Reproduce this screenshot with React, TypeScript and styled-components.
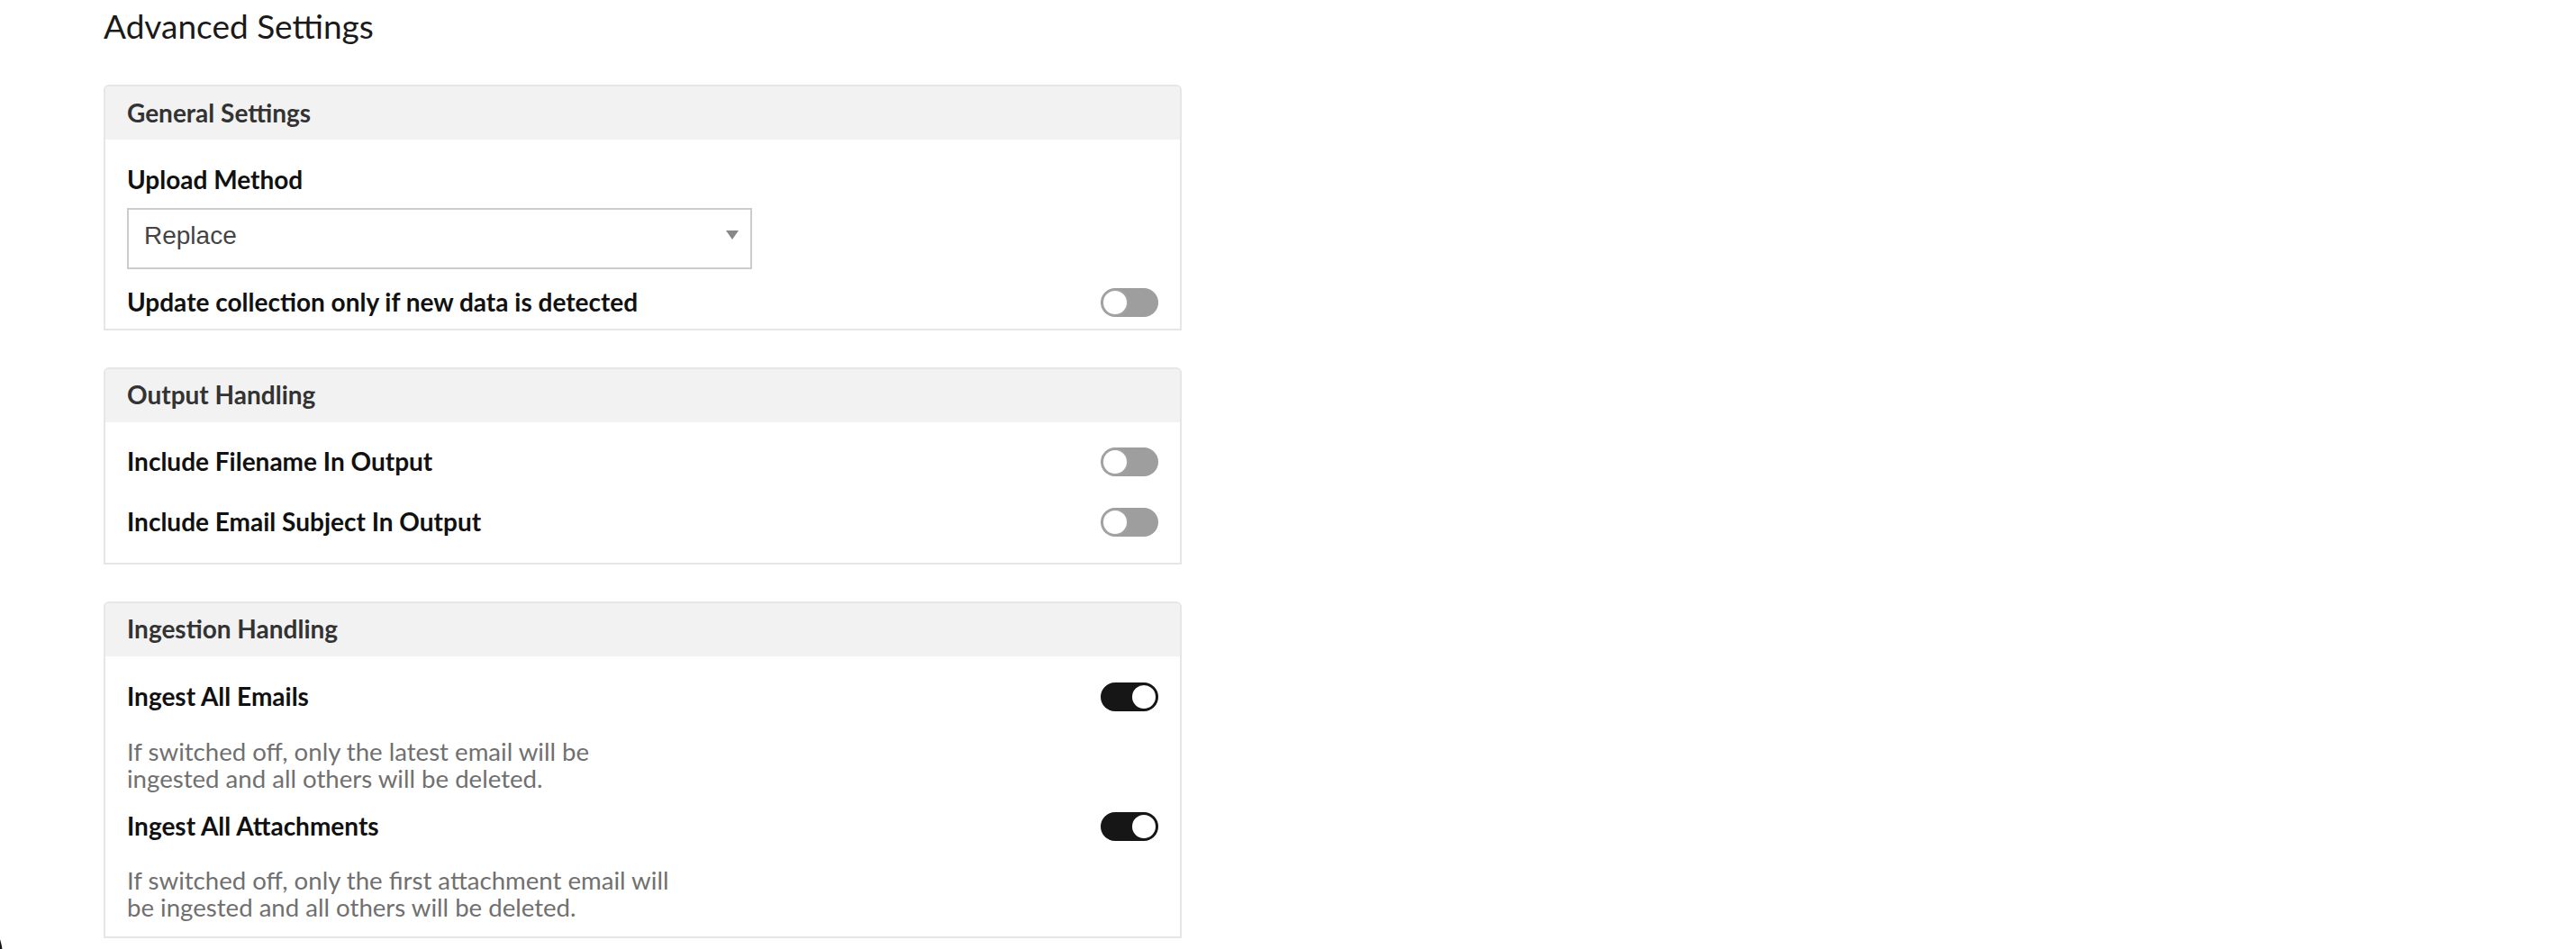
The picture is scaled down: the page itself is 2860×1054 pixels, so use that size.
import React from "react";
import styled, { createGlobalStyle } from "styled-components";

const GlobalStyle = createGlobalStyle`
  html, body {
    margin: 0;
    padding: 0;
    background: #ffffff;
  }
  body {
    font-family: Lato, "Open Sans", "Liberation Sans", sans-serif;
    color: #111111;
  }
  * { box-sizing: border-box; }
`;

const Page = styled.main`
  padding: 0 0 0 115px;
`;

const Content = styled.div`
  width: 1197px;
  display: flex;
  flex-direction: column;
`;

const Title = styled.h1`
  margin: 7px 0 0;
  font-size: 37px;
  line-height: 44px;
  font-weight: 400;
  color: #1a1a1a;
`;

const Card = styled.section<{ $top: number }>`
  margin-top: ${(p) => p.$top}px;
  border: 2px solid #e6e6e6;
  border-radius: 6px 6px 0 0;
  overflow: hidden;
  background: #ffffff;
`;

const CardHeader = styled.h2`
  margin: 0;
  height: 59px;
  padding: 0 24px;
  display: flex;
  align-items: center;
  background: #f2f2f2;
  font-size: 28px;
  line-height: 1.2;
  font-weight: 700;
  color: #333333;
`;

const CardBody = styled.div<{ $pt: number; $pb: number }>`
  padding: ${(p) => p.$pt}px 24px ${(p) => p.$pb}px;
  display: flex;
  flex-direction: column;
`;

const Label = styled.div<{ $mt?: number }>`
  margin-top: ${(p) => p.$mt ?? 0}px;
  font-size: 28px;
  line-height: 1.2;
  font-weight: 700;
  color: #111111;
`;

const SelectBox = styled.div`
  margin-top: 14px;
  width: 694px;
  height: 68px;
  border: 2px solid #cccccc;
  background: #ffffff;
  display: flex;
  align-items: center;
  justify-content: space-between;
  padding: 0 13px 5px 17px;
  font-family: "Liberation Sans", Arial, sans-serif;
  font-size: 28px;
  color: #444444;
`;

const Arrow = styled.svg`
  width: 14px;
  height: 10px;
  margin-top: -3px;
  flex: none;
`;

const ToggleRow = styled.div<{ $mt?: number }>`
  margin-top: ${(p) => p.$mt ?? 0}px;
  display: flex;
  align-items: center;
  justify-content: space-between;
  min-height: 34px;
`;

const Description = styled.p<{ $mt: number }>`
  margin: ${(p) => p.$mt}px 0 0;
  max-width: 620px;
  font-size: 27.6px;
  line-height: 30px;
  font-weight: 400;
  color: #707070;
`;

const Track = styled.span<{ $on: boolean }>`
  position: relative;
  flex: none;
  width: 64px;
  height: 32px;
  border-radius: 16px;
  background: ${(p) => (p.$on ? "#161616" : "#9e9e9e")};
`;

const Knob = styled.span<{ $on: boolean }>`
  position: absolute;
  top: 1px;
  left: ${(p) => (p.$on ? "33px" : "1px")};
  width: 30px;
  height: 30px;
  border-radius: 50%;
  background: #ffffff;
  border: 2px solid ${(p) => (p.$on ? "#161616" : "#a3a3a3")};
`;

const Corner = styled.div`
  position: fixed;
  left: -117px;
  top: 1002px;
  width: 120px;
  height: 120px;
  border-radius: 50%;
  background: #151515;
`;

const Toggle = ({ on }: { on: boolean }) => (
  <Track $on={on} role="switch" aria-checked={on}>
    <Knob $on={on} />
  </Track>
);

export default function App() {
  return (
    <>
      <GlobalStyle />
      <Page>
        <Content>
          <Title>Advanced Settings</Title>

          <Card $top={43}>
            <CardHeader>General Settings</CardHeader>
            <CardBody $pt={28} $pb={12}>
              <Label>Upload Method</Label>
              <SelectBox>
                <span>Replace</span>
                <Arrow viewBox="0 0 14 10">
                  <path d="M0 0 L14 0 L7 10 Z" fill="#888888" />
                </Arrow>
              </SelectBox>
              <ToggleRow $mt={20}>
                <Label>Update collection only if new data is detected</Label>
                <Toggle on={false} />
              </ToggleRow>
            </CardBody>
          </Card>

          <Card $top={41}>
            <CardHeader>Output Handling</CardHeader>
            <CardBody $pt={27} $pb={28}>
              <ToggleRow>
                <Label>Include Filename In Output</Label>
                <Toggle on={false} />
              </ToggleRow>
              <ToggleRow $mt={33}>
                <Label>Include Email Subject In Output</Label>
                <Toggle on={false} />
              </ToggleRow>
            </CardBody>
          </Card>

          <Card $top={41}>
            <CardHeader>Ingestion Handling</CardHeader>
            <CardBody $pt={28} $pb={17}>
              <ToggleRow>
                <Label>Ingest All Emails</Label>
                <Toggle on={true} />
              </ToggleRow>
              <Description $mt={29}>
                If switched off, only the latest email will be ingested and all
                others will be deleted.
              </Description>
              <ToggleRow $mt={21}>
                <Label>Ingest All Attachments</Label>
                <Toggle on={true} />
              </ToggleRow>
              <Description $mt={28}>
                If switched off, only the first attachment email will be
                ingested and all others will be deleted.
              </Description>
            </CardBody>
          </Card>
        </Content>
      </Page>
      <Corner />
    </>
  );
}
